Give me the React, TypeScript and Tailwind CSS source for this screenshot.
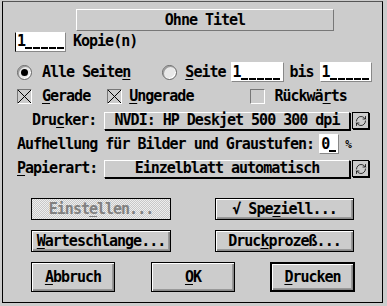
import { RefreshCw } from "lucide-react"

const font = "font-['DejaVu_Sans_Mono',monospace] font-bold text-[15px] tracking-[-1px] leading-none text-black"

const FieldText = ({ value }: { value: string }) => (
  <div className="flex items-center">
    {[...value].map((c, i) =>
      c === "_" ? (
        <span key={i} className="relative w-[8px] h-[15px]">
          <span className="absolute left-0 bottom-0 w-[7px] h-[2px] bg-black" />
        </span>
      ) : (
        <span key={i} className="w-[8px] h-[15px]">{c}</span>
      )
    )}
  </div>
)

const Field = ({ value, w, cursor }: { value: string; w: string; cursor?: boolean }) => (
  <div className={`${w} h-[20px] bg-white border border-t-white ${cursor ? "border-l-black" : "border-l-white"} border-r-[#888] border-b-[#888] flex items-center pl-[1px]`}>
    <FieldText value={value} />
  </div>
)

const Radio = ({ on }: { on?: boolean }) => (
  <div className="w-[15px] h-[15px] rounded-full border border-[#666] bg-[#e8e8e8] shadow-[inset_-1px_-1px_0_#fff,inset_1px_1px_0_#999] flex items-center justify-center">
    {on && <div className="w-[7px] h-[7px] rounded-full bg-black" />}
  </div>
)

const Check = ({ on }: { on?: boolean }) => (
  <div className="w-[15px] h-[15px] border border-t-[#777] border-l-[#777] border-r-white border-b-white">
    {on && (
      <svg width="13" height="13" viewBox="0 0 13 13">
        <path d="M0 0L13 13M13 0L0 13" stroke="#000" strokeWidth="1" />
      </svg>
    )}
  </div>
)

const Popup = ({ label }: { label: string }) => (
  <div className="flex items-center">
    <div className="w-[246px] h-[18px] border border-t-white border-l-white border-r-black border-b-black shadow-[1px_1px_0_#000] flex items-center justify-center">
      {label}
    </div>
    <div className="ml-[2px] w-[17px] h-[17px] border border-black shadow-[1px_1px_0_#000] flex items-center justify-center">
      <RefreshCw size={12} strokeWidth={1.5} />
    </div>
  </div>
)

const Button = ({ children, w, h = "h-[22px]", def }: { children: React.ReactNode; w: string; h?: string; def?: boolean }) => (
  <div className={`${w} ${h} ${def ? "border-2" : "border"} border-black shadow-[inset_1px_1px_0_#fff,inset_-1px_-1px_0_#888,inset_-2px_-2px_0_#999] flex items-center justify-center`}>
    {children}
  </div>
)

const U = ({ children }: { children: React.ReactNode }) => <u className="underline-offset-2">{children}</u>

export default function App() {
  return (
    <div className={`w-[387px] h-[306px] bg-[#cccccc] pt-[1px] pl-[2px] ${font}`}>
      <div className="w-[381px] h-[302px] border border-black border-t-[#555] flex flex-col">
        <div className="mt-[7px] ml-[73px] w-[258px] h-[22px] border border-t-white border-l-white border-r-[#777] border-b-[#777] flex items-center justify-center">
          Ohne Titel
        </div>

        <div className="mt-[1px] ml-[12px] flex items-center h-[19px]">
          <Field value="1_____" w="w-[51px]" cursor />
          <span className="ml-[7px]">Kopie(n)</span>
        </div>

        <div className="mt-[11px] ml-[14px] flex items-center h-[20px]">
          <Radio on />
          <span className="ml-[10px]">Alle Seite<U>n</U></span>
          <div className="ml-[32px]"><Radio /></div>
          <span className="ml-[8px]"><U>S</U>eite</span>
          <div className="ml-[5px]"><Field value="1_____" w="w-[53px]" /></div>
          <span className="ml-[6px]">bis</span>
          <div className="ml-[6px]"><Field value="1_____" w="w-[52px]" /></div>
        </div>

        <div className="mt-[4px] ml-[14px] flex items-center h-[20px]">
          <Check on />
          <span className="ml-[10px]"><U>G</U>erade</span>
          <div className="ml-[17px]"><Check on /></div>
          <span className="ml-[7px]"><U>U</U>ngerade</span>
          <div className="ml-[57px]"><Check /></div>
          <span className="ml-[9px]">Rückwä<U>r</U>ts</span>
        </div>

        <div className="mt-[5px] ml-[29px] flex items-center h-[19px]">
          <span className="w-[72px]">Dru<U>c</U>ker:</span>
          <Popup label="NVDI: HP Deskjet 500 300 dpi" />
        </div>

        <div className="mt-[4px] ml-[14px] flex items-center h-[20px]">
          <span>Aufhellung für Bilder und Graustufen:</span>
          <div className="ml-[5px]"><Field value="0_" w="w-[20px]" /></div>
          <span className="ml-[6px] text-[11px]">%</span>
        </div>

        <div className="mt-[5px] ml-[14px] flex items-center h-[19px]">
          <span className="w-[87px]"><U>P</U>apierart:</span>
          <Popup label="Einzelblatt automatisch" />
        </div>

        <div className="mt-[20px] ml-[28px] flex items-center">
          <div className="w-[140px] h-[22px] border border-black bg-[repeating-conic-gradient(#eee_0_25%,#c8c8c8_0_50%)] bg-[length:2px_2px] flex items-center justify-center text-[#808080]">
            Einst<U>e</U>llen...
          </div>
          <div className="ml-[44px]">
            <Button w="w-[139px]">√ Spe<U>z</U>iell...</Button>
          </div>
        </div>

        <div className="mt-[10px] ml-[28px] flex items-center">
          <Button w="w-[140px]"><U>W</U>arteschlange...</Button>
          <div className="ml-[44px]">
            <Button w="w-[139px]">Druc<U>k</U>prozeß...</Button>
          </div>
        </div>

        <div className="mt-[10px] ml-[28px] flex items-center">
          <Button w="w-[84px]" h="h-[30px]"><U>A</U>bbruch</Button>
          <div className="ml-[36px]">
            <Button w="w-[84px]" h="h-[30px]"><U>O</U>K</Button>
          </div>
          <div className="ml-[35px]">
            <Button w="w-[85px]" h="h-[30px]" def><U>D</U>rucken</Button>
          </div>
        </div>
      </div>
    </div>
  )
}
